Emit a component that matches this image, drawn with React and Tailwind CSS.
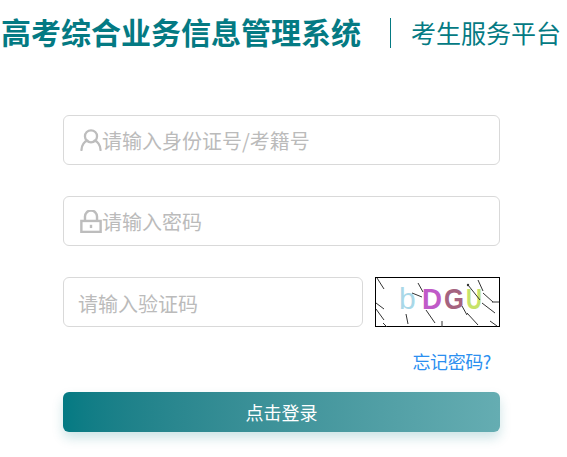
import React from 'react';

const fontStack = "font-['Noto_Sans_CJK_SC','Noto_Sans',sans-serif]";

const UserIcon = () => (
  <svg width="22" height="22" viewBox="0 0 24 24" fill="none" stroke="#bdbdbd" strokeWidth="2.5" className="shrink-0">
    <circle cx="12" cy="8" r="6.6" />
    <path d="M1.6 23c0-5.6 3.6-9.6 6.6-10.2M22.4 23c0-5.6-3.6-9.6-6.6-10.2" strokeLinecap="round" />
  </svg>
);

const LockIcon = () => (
  <svg width="22" height="23" viewBox="0 0 20 21" fill="none" stroke="#bdbdbd" strokeWidth="2.2" className="shrink-0">
    <path d="M4.5 10V6a5.5 5.5 0 0 1 11 0v4" />
    <rect x="1.2" y="10" width="17.6" height="10" />
    <path d="M10 13.5v3" />
  </svg>
);

const Captcha = () => (
  <svg width="125" height="50" viewBox="0 0 125 50" className="shrink-0">
    <rect x="0.5" y="0.5" width="124" height="49" fill="#fff" stroke="#000" />
    <g fontFamily="Liberation Sans, sans-serif" fontSize="30" lengthAdjust="spacingAndGlyphs">
      <text x="24" y="32" fill="#a9d8e8">b</text>
      <text x="47" y="32" fontWeight="bold" fill="#c05ac8" textLength="20" lengthAdjust="spacingAndGlyphs">D</text>
      <text x="69" y="32" fontWeight="bold" fill="#a5637f" textLength="20" lengthAdjust="spacingAndGlyphs">G</text>
      <text x="91" y="32" fontWeight="bold" fill="#c6e36a" textLength="16" lengthAdjust="spacingAndGlyphs">U</text>
    </g>
    <path
      d="M2 1l7 11M1 26l8 6M1 32l8 11M31 37l2 10M37 16l10 4M43 6l5 9M51 33l9 13M67 44v6M87 29l5 9M92 36l11 12M93 8l12 15M103 3l5 11M108 16l10 9M117 25h7M107 26l13 10M115 44l7 5M8 46l4 4"
      stroke="#333"
      fill="none"
    />
    <circle cx="93" cy="8" r="1.2" fill="#333" />
  </svg>
);

export default function App() {
  return (
    <div className={`${fontStack} w-[567px] h-[457px] bg-white overflow-hidden`}>
      {/* Header */}
      <div className="flex items-center h-[30px] mt-[18px] pl-[1px] text-[#047a83]">
        <h1 className="text-[30px] leading-[30px] pb-[4px] font-bold whitespace-nowrap">高考综合业务信息管理系统</h1>
        <div className="w-px h-[30px] bg-[#047a83] ml-[29px] mr-[20px]" />
        <span className="text-[25px] leading-[30px] pb-[2px] whitespace-nowrap">考生服务平台</span>
      </div>

      {/* Form */}
      <div className="w-[437px] ml-[63px] mt-[67px] flex flex-col">
        <label className="flex items-center h-[50px] pl-[16px] pr-[15px] border border-[#d9d9d9] rounded-md">
          <UserIcon />
          <input
            placeholder="请输入身份证号/考籍号"
            className="pt-[2px] flex-1 min-w-0 text-[20px] outline-none placeholder:text-[#bbbbbb]"
          />
        </label>
        <label className="flex items-center h-[50px] mt-[31px] pl-[16px] pr-[15px] border border-[#d9d9d9] rounded-md">
          <LockIcon />
          <input
            placeholder="请输入密码"
            className="pt-[2px] flex-1 min-w-0 text-[20px] outline-none placeholder:text-[#bbbbbb]"
          />
        </label>
        <div className="flex items-center justify-between mt-[31px]">
          <input
            placeholder="请输入验证码"
            className="w-[300px] h-[50px] pt-[2px] px-[14px] border border-[#d9d9d9] rounded-md text-[20px] outline-none placeholder:text-[#bbbbbb]"
          />
          <Captcha />
        </div>
        <div className="flex justify-end mt-[21px] pr-[9px]">
          <a className="text-[18px] leading-[26px] tracking-[-0.4px] text-[#2b8ff0] whitespace-nowrap">忘记密码?</a>
        </div>
        <button className="h-[40px] mt-[18px] rounded-md text-white text-[18px] bg-gradient-to-r from-[#047a83] to-[#65adb2] shadow-[0_6px_12px_rgba(4,122,131,0.2)]">
          点击登录
        </button>
      </div>
    </div>
  );
}
